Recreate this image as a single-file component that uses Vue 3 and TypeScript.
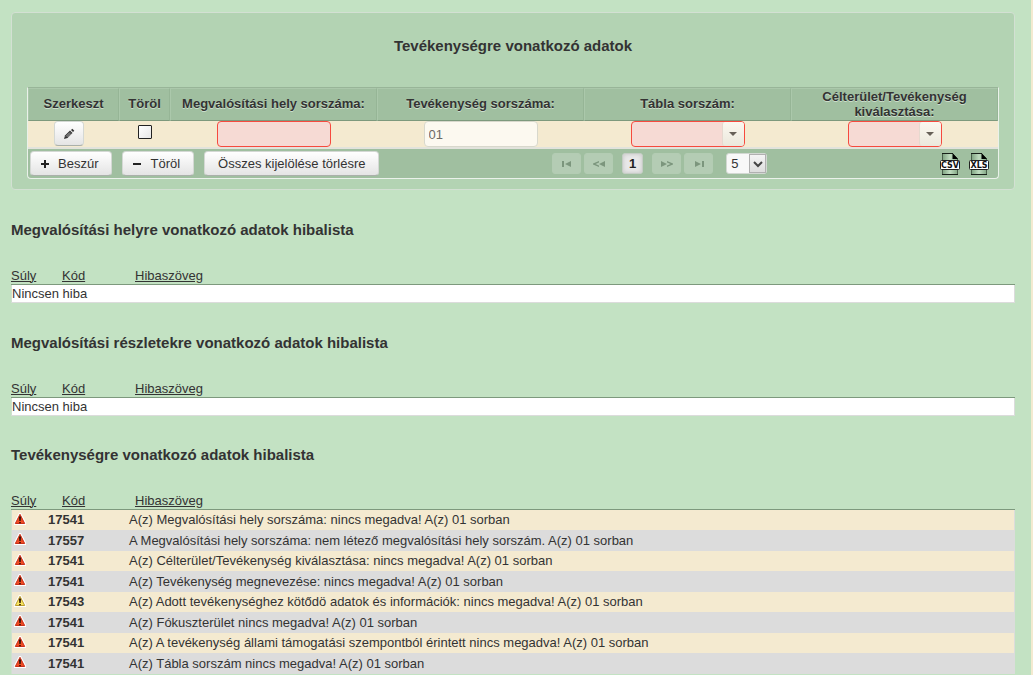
<script setup lang="ts">
import { ref } from 'vue'

interface Issue {
  level: 'error' | 'warning'
  code: string
  text: string
}

interface IssueList {
  id: string
  title: string
  issues: Issue[]
}

const issue = (code: string, text: string, level: Issue['level'] = 'error'): Issue => ({ level, code, text })

const lists: IssueList[] = [
  { id: 'hely', title: 'Megvalósítási helyre vonatkozó adatok hibalista', issues: [] },
  { id: 'reszlet', title: 'Megvalósítási részletekre vonatkozó adatok hibalista', issues: [] },
  {
    id: 'tevekenyseg',
    title: 'Tevékenységre vonatkozó adatok hibalista',
    issues: [
      issue('17541', 'A(z) Megvalósítási hely sorszáma: nincs megadva! A(z) 01 sorban'),
      issue('17557', 'A Megvalósítási hely sorszáma: nem létező megvalósítási hely sorszám. A(z) 01 sorban'),
      issue('17541', 'A(z) Célterület/Tevékenység kiválasztása: nincs megadva! A(z) 01 sorban'),
      issue('17541', 'A(z) Tevékenység megnevezése: nincs megadva! A(z) 01 sorban'),
      issue('17543', 'A(z) Adott tevékenységhez kötődö adatok és információk: nincs megadva! A(z) 01 sorban', 'warning'),
      issue('17541', 'A(z) Fókuszterület nincs megadva! A(z) 01 sorban'),
      issue('17541', 'A(z) A tevékenység állami támogatási szempontból érintett nincs megadva! A(z) 01 sorban'),
      issue('17541', 'A(z) Tábla sorszám nincs megadva! A(z) 01 sorban'),
    ],
  },
]

const exportsList = ['CSV', 'XLS']
const place = ref('')
const activity = ref('01')
const marked = ref(false)
const pageSize = ref('5')
</script>

<template>
  <main class="page">
    <section class="panel">
      <h2 class="panel-title">Tevékenységre vonatkozó adatok</h2>
      <div class="grid-box">
        <table class="grid">
          <colgroup>
            <col class="c-edit" />
            <col class="c-del" />
            <col />
            <col />
            <col />
            <col />
          </colgroup>
          <thead>
            <tr>
              <th scope="col">Szerkeszt</th>
              <th id="h-del" scope="col">Töröl</th>
              <th id="h-place" scope="col">Megvalósítási hely sorszáma:</th>
              <th id="h-act" scope="col">Tevékenység sorszáma:</th>
              <th id="h-table" scope="col">Tábla sorszám:</th>
              <th id="h-target" scope="col">Célterület/Tevékenység kiválasztása:</th>
            </tr>
          </thead>
          <tbody>
            <tr>
              <td class="edit-cell">
                <button class="btn edit" type="button" aria-label="Szerkeszt">
                  <svg width="12" height="12" viewBox="0 0 12 12">
                    <path d="M1 11l1-3.500 5-5L9.500 5l-5 5z" fill="#333" />
                    <path d="M3 8.500l4-4M4.500 9l3.500-3.500" stroke="#ccc" stroke-width=".8" />
                    <path d="M8 2l1.300-1.300 2 2L10 4z" fill="#333" />
                  </svg>
                </button>
              </td>
              <td><input v-model="marked" class="check" type="checkbox" aria-labelledby="h-del" /></td>
              <td><input v-model="place" class="field invalid" type="text" aria-labelledby="h-place" /></td>
              <td><input v-model="activity" class="field readonly" type="text" readonly aria-labelledby="h-act" /></td>
              <td>
                <span class="combo">
                  <select class="field invalid" aria-labelledby="h-table"><option></option></select>
                  <span class="combo-btn"><i class="arrow"></i></span>
                </span>
              </td>
              <td>
                <span class="combo narrow">
                  <select class="field invalid" aria-labelledby="h-target"><option></option></select>
                  <span class="combo-btn"><i class="arrow"></i></span>
                </span>
              </td>
            </tr>
          </tbody>
        </table>
        <div class="toolbar">
          <div class="actions">
            <button class="btn" type="button">
              <svg width="10" height="10" viewBox="0 0 10 10"><path d="M4 1h2v3h3v2H6v3H4V6H1V4h3z" fill="#222" /></svg>
              Beszúr
            </button>
            <button class="btn" type="button">
              <svg width="10" height="10" viewBox="0 0 10 10"><path d="M1 4h8v2H1z" fill="#222" /></svg>
              Töröl
            </button>
            <button class="btn" type="button">Összes kijelölése törlésre</button>
          </div>
          <nav class="pager" aria-label="Lapozó">
            <button class="page-btn" type="button" disabled aria-label="Első">
              <svg width="10" height="6" viewBox="0 0 10 6"><path d="M0 0h2v6H0zM9 0v6L3 3z" /></svg>
            </button>
            <button class="page-btn" type="button" disabled aria-label="Előző">
              <svg width="12" height="6" viewBox="0 0 12 6"><path d="M12 0v6L6 3zM6 0v1.400L2.500 3 6 4.600V6L0 3.500v-1z" /></svg>
            </button>
            <button class="page-current" type="button">1</button>
            <button class="page-btn" type="button" disabled aria-label="Következő">
              <svg width="12" height="6" viewBox="0 0 12 6"><path d="M0 0v6l6-3zM6 0v1.400L9.500 3 6 4.600V6l6-2.500v-1z" /></svg>
            </button>
            <button class="page-btn" type="button" disabled aria-label="Utolsó">
              <svg width="10" height="6" viewBox="0 0 10 6"><path d="M1 0v6l6-3zM8 0h2v6H8z" /></svg>
            </button>
            <span class="size">
              <select v-model="pageSize" aria-label="Sorok száma">
                <option>5</option>
                <option>10</option>
                <option>15</option>
              </select>
              <span class="size-btn">
                <svg width="10" height="8" viewBox="0 0 10 8"><path d="M1 2l4 4 4-4" fill="none" stroke="#444" stroke-width="2" /></svg>
              </span>
            </span>
          </nav>
          <div class="exports">
            <a v-for="kind in exportsList" :key="kind" href="#" :aria-label="kind">
              <svg width="20" height="22" viewBox="0 0 20 22">
                <defs>
                  <linearGradient :id="'doc-' + kind" x1="0" x2="1" y1="0" y2="0">
                    <stop offset="0" stop-color="#7fa381" />
                    <stop offset="0.500" stop-color="#c0dcc0" />
                    <stop offset="1" stop-color="#84a886" />
                  </linearGradient>
                </defs>
                <path d="M2.500 .5h10l5 5v16h-15z" :fill="'url(#doc-' + kind + ')'" stroke="#4a5f4b" />
                <path d="M2 .5h11" stroke="#172018" />
                <path d="M12.500 0L18 6h-5.500z" fill="#000" />
                <path d="M2 21.500h16" stroke="#172018" />
                <rect x=".5" y="7.500" width="19" height="9" rx="1" fill="#fff" stroke="#222" />
                <text x="10" y="15" text-anchor="middle" font-family="DejaVu Sans, sans-serif" font-weight="700" font-size="8" fill="#111">{{ kind }}</text>
              </svg>
            </a>
          </div>
        </div>
      </div>
    </section>

    <section v-for="list in lists" :key="list.id" class="list">
      <h3 class="list-title">{{ list.title }}</h3>
      <table class="issues">
        <colgroup>
          <col class="c-level" />
          <col class="c-code" />
          <col />
        </colgroup>
        <thead>
          <tr>
            <th scope="col"><a href="#">Súly</a></th>
            <th scope="col" class="code-head"><a href="#">Kód</a></th>
            <th scope="col" class="text-head"><a href="#">Hibaszöveg</a></th>
          </tr>
        </thead>
        <tbody>
          <tr v-if="!list.issues.length" class="empty">
            <td colspan="3">Nincsen hiba</td>
          </tr>
          <tr v-for="(item, i) in list.issues" :key="i" class="issue">
            <td class="level">
              <svg width="12" height="12" viewBox="0 0 12 12" role="img" :aria-label="item.level">
                <path d="M5 0L0 9.500V12h12V9.500L7 0z" fill="#fff" />
                <path
                  d="M6 1.300L1.300 10.500h9.400z"
                  :fill="item.level === 'error' ? '#f04a22' : '#f8e45c'"
                  :stroke="item.level === 'error' ? '#c9301a' : '#b89a30'"
                />
                <path d="M5 3.500h2L6.700 8H5.300zM5.200 9h1.600v1.300H5.200z" fill="#2b1108" />
              </svg>
            </td>
            <td class="code">{{ item.code }}</td>
            <td>{{ item.text }}</td>
          </tr>
        </tbody>
      </table>
    </section>
  </main>
</template>

<style>
body {
  background: #c3e2c3;
}
</style>

<style scoped>
.page {
  box-sizing: border-box;
  min-height: 100vh;
  padding: 12px 16px 0 11px;
  border-right: 2px solid #f4ead0;
  background: #c3e2c3;
  color: #333;
  font: 13px/16px "Liberation Sans", Arial, sans-serif;
}
.page * {
  box-sizing: border-box;
}
button,
input,
select {
  margin: 0;
  font: inherit;
  color: inherit;
}
table {
  width: 100%;
  border-collapse: separate;
  border-spacing: 0;
  table-layout: fixed;
}
th,
td {
  padding: 0;
}
.panel {
  padding: 23px 15px 10px;
  border: 1px solid #d3e0d3;
  border-radius: 4px;
  background: #b3d3b3;
}
.panel-title {
  margin: 0 0 31px;
  font-size: 15px;
  line-height: 20px;
  text-align: center;
}
.grid-box {
  border: 1px solid #eaf1ea;
  border-top-color: #98b598;
  border-radius: 0 0 4px 4px;
  background: #a0bfa0;
}
.c-edit {
  width: 91px;
}
.c-del {
  width: 51px;
}
.grid th {
  height: 33px;
  padding-bottom: 2px;
  line-height: 15px;
  border-top: 1px solid #abc8ab;
  border-right: 1px solid #96b596;
  border-left: 1px solid #abc8ab;
  border-bottom: 1px solid #7d997d;
  text-align: center;
  text-shadow: 0 1px 0 #ccdecc;
}
.grid th:last-child {
  padding: 0 25px 1px;
}
.grid td {
  height: 28px;
  border-bottom: 2px solid #e2e3dc;
  background: #f4ead0;
  text-align: center;
  vertical-align: top;
}
.btn {
  display: inline-flex;
  align-items: center;
  justify-content: center;
  gap: 8px;
  height: 25px;
  padding: 0 13px 0 9px;
  border: 1px solid #d4d8d4;
  border-bottom-color: #aab0aa;
  border-radius: 4px;
  background: linear-gradient(#fff, #e4e4e4);
}
.actions .btn:last-child {
  padding: 0 13px;
}
.grid .edit {
  width: 30px;
  padding: 0;
}
.grid .edit-cell {
  padding-right: 9px;
}
.check {
  appearance: none;
  display: inline-block;
  width: 14px;
  height: 14px;
  margin-top: 4px;
  border: 1px solid #222;
  border-radius: 1px;
  background: linear-gradient(135deg, #fff, #e6e6e6);
}
.field {
  appearance: none;
  display: block;
  width: 114px;
  height: 26px;
  margin: 0 auto;
  padding: 0 4px;
  border: 1px solid #d8d8cc;
  border-radius: 4px;
  background: #fcf9f0;
  color: #6e6a65;
}
.field.invalid {
  border-color: #f64a3e;
  background: #f6dad4;
}
.combo {
  position: relative;
  display: block;
  width: 114px;
  margin: 0 auto;
}
.combo.narrow {
  width: 94px;
}
.combo .field {
  width: 100%;
}
.combo-btn {
  position: absolute;
  top: 1px;
  right: 1px;
  bottom: 1px;
  display: flex;
  align-items: center;
  justify-content: center;
  width: 22px;
  border-left: 1px solid #e6d9cf;
  border-radius: 3px;
  background: linear-gradient(#fbf8f0, #ebe8dc);
  pointer-events: none;
}
.arrow {
  border: 4px solid transparent;
  border-top-color: #666058;
  border-bottom: 0;
}
.toolbar {
  display: flex;
  align-items: center;
  justify-content: space-between;
  height: 29px;
  padding: 0 9px 0 2px;
}
.actions {
  display: flex;
  gap: 10px;
}
.pager {
  display: flex;
  gap: 3px;
  height: 21px;
}
.page-btn {
  display: flex;
  align-items: center;
  justify-content: center;
  width: 29px;
  padding: 0;
  border: 1px solid #b3ccb3;
  border-radius: 3px;
  background: #b4ccb4;
  fill: #7c967d;
}
.page-current {
  width: 21px;
  margin: 0 6px;
  padding: 0;
  border: 1px solid #c5cdc5;
  border-radius: 3px;
  background: #e8e8e8;
  box-shadow: inset 0 0 4px #c4c4c4;
  font-weight: 700;
  color: #222;
}
.size {
  position: relative;
  width: 41px;
  margin-left: 10px;
}
.size select {
  appearance: none;
  display: block;
  width: 100%;
  height: 21px;
  padding: 0 4px;
  border: 1px solid #d2d8d2;
  border-radius: 3px;
  background: #f8f8f8;
}
.size-btn {
  position: absolute;
  top: 1px;
  right: 1px;
  bottom: 1px;
  display: flex;
  align-items: center;
  justify-content: center;
  width: 17px;
  border: 1px solid #b0b0b0;
  background: linear-gradient(#f4f4f4, #ddd);
  pointer-events: none;
}
.exports {
  display: flex;
  gap: 9px;
}
.exports a,
.exports svg,
.level svg {
  display: block;
}
.list {
  margin-top: 30px;
}
.list:last-child {
  margin-top: 29px;
}
.list-title {
  margin: 0 0 27px;
  font-size: 15px;
  line-height: 20px;
}
.issues a {
  color: inherit;
}
.c-level {
  width: 37px;
}
.c-code {
  width: 81px;
}
.issues th {
  height: 18px;
  border-bottom: 1px solid #7d997d;
  font-weight: 400;
  text-align: left;
}
.issues .code-head {
  padding-left: 14px;
}
.issues .text-head {
  padding-left: 6px;
}
.issues td:first-child {
  border-left: 1px solid #cfe0cf;
}
.issues td:last-child {
  border-right: 1px solid #dcdcdc;
}
.empty td {
  height: 18px;
  border-bottom: 1px solid #dcdcdc;
  background: #fff;
}
.issue td {
  height: 20px;
  background: #f4ead0;
}
.issue:nth-child(even) td {
  height: 21px;
  background: #dcdcdc;
}
.issue .level {
  padding: 3px 0 0 2px;
  vertical-align: top;
}
.issue .code {
  font-weight: 700;
}
</style>
